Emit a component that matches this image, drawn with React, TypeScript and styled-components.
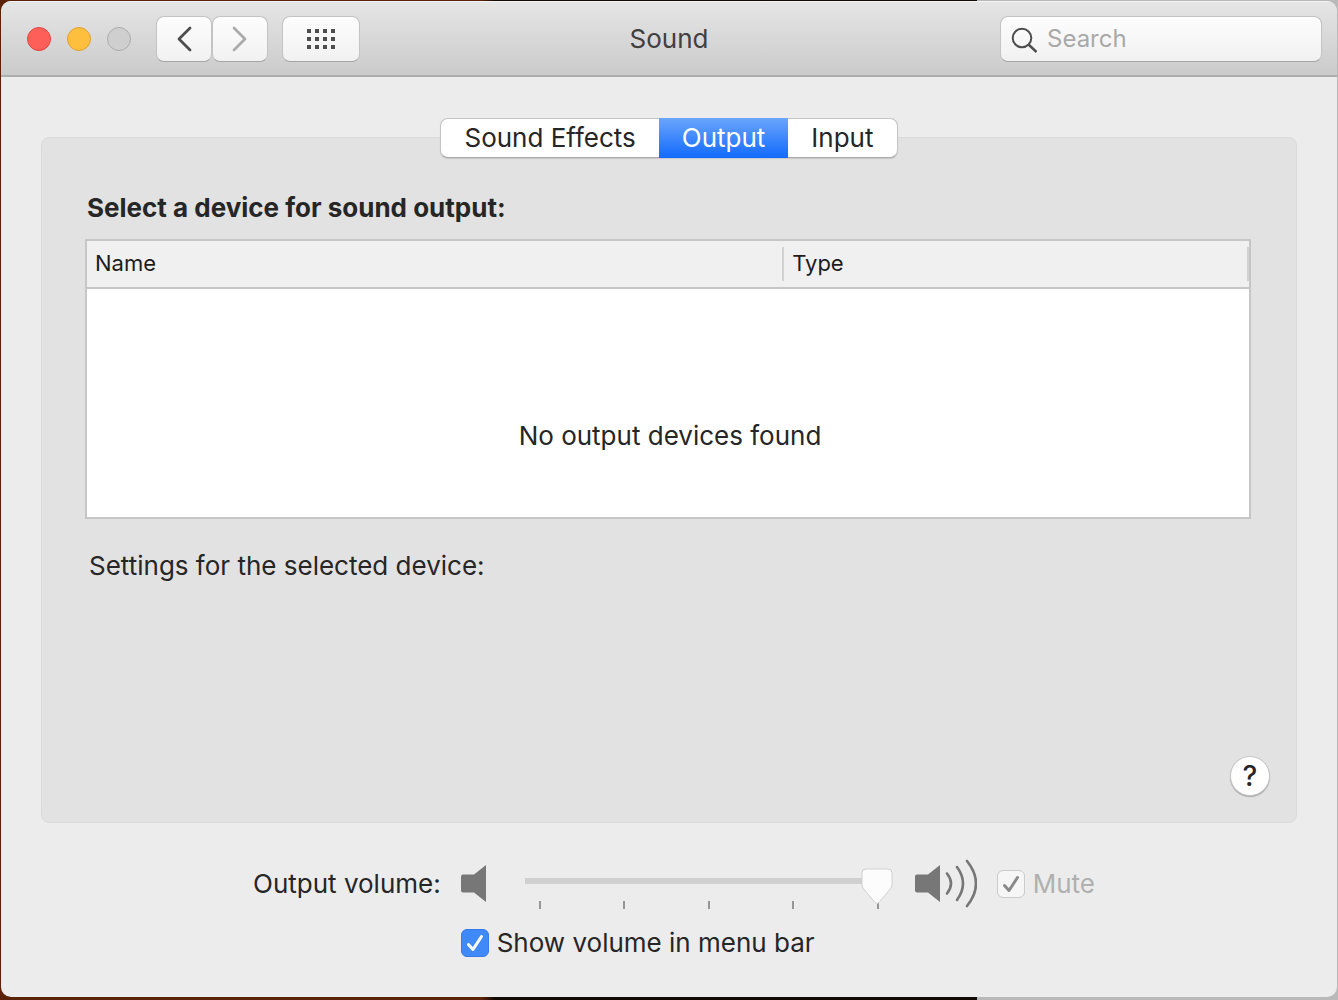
import React, { useState } from 'react';
import styled, { createGlobalStyle, css } from 'styled-components';

const GlobalStyle = createGlobalStyle`
  * { box-sizing: border-box; }
  body {
    margin: 0;
    font-family: Inter, "Liberation Sans", sans-serif;
    font-size: 26px;
    line-height: 32px;
    color: #262626;
  }
  button, input { font: inherit; color: inherit; }
`;

const Desktop = styled.div`
  display: flex;
  min-height: 100vh;
  padding: 1px 1px 3px;
  background: linear-gradient(to right, #5a2209 36%, #120a05 37% 73%, #b9b9b9 73%);
`;

const Window = styled.div`
  flex: 1;
  display: flex;
  flex-direction: column;
  border-radius: 10px;
  overflow: hidden;
  background: #ececec;
`;

const Toolbar = styled.header`
  display: grid;
  grid-template-columns: 1fr auto 1fr;
  align-items: center;
  height: 76px;
  padding: 0 15px;
  border-top: 1px solid #f4f4f4;
  border-bottom: 2px solid #adadad;
  background: linear-gradient(#e5e5e5, #cbcbcb);
`;

const ToolbarGroup = styled.div`
  display: flex;
  align-items: center;
`;

const Lights = styled.div`
  display: flex;
  gap: 16px;
  margin: 0 25px 0 11px;
`;

const Light = styled.button<{ $fill: string; $edge: string }>`
  width: 24px;
  height: 24px;
  padding: 0;
  border: 1px solid ${(p) => p.$edge};
  border-radius: 50%;
  background: ${(p) => p.$fill};
`;

const raised = css`
  border: 1px solid #c3c3c3;
  border-bottom-color: #a5a5a5;
  border-radius: 8px;
  background: linear-gradient(#fdfdfd, #f1f1f1);
`;

const ToolButton = styled.button<{ $wide?: boolean }>`
  ${raised}
  display: flex;
  align-items: center;
  justify-content: center;
  width: ${(p) => (p.$wide ? 78 : 56)}px;
  height: 46px;
  margin-left: ${(p) => (p.$wide ? 14 : 0)}px;
  padding: 0;
  color: ${(p) => (p.disabled ? '#ababab' : '#4d4d4d')};
`;

const Title = styled.h1`
  margin: 0;
  font-size: 26px;
  font-weight: 400;
  color: #404040;
`;

const SearchBox = styled.label`
  ${raised}
  display: flex;
  align-items: center;
  gap: 8px;
  justify-self: end;
  width: 322px;
  height: 46px;
  padding: 0 10px;
`;

const SearchInput = styled.input`
  flex: 1;
  min-width: 0;
  padding: 0;
  border: 0;
  outline: 0;
  background: none;
  font-size: 24px;
  &::placeholder { color: #a9a9a9; opacity: 1; }
`;

const Content = styled.main`
  flex: 1;
  display: flex;
  flex-direction: column;
  padding: 41px 40px 38px;
`;

const Tabs = styled.div`
  position: relative;
  display: flex;
  align-self: center;
  height: 40px;
  border: 1px solid #c4c4c4;
  border-bottom-color: #a9a9a9;
  border-radius: 8px;
  background: #fff;
  box-shadow: 0 1px 1px rgba(0, 0, 0, 0.12);
`;

const Tab = styled.button<{ $active: boolean }>`
  margin: -1px 0;
  padding: 0 23px;
  border: 0;
  background: ${(p) => (p.$active ? 'linear-gradient(#6aa5fb, #136afd)' : 'none')};
  color: ${(p) => (p.$active ? '#fff' : '#262626')};
`;

const Panel = styled.section`
  flex: 1;
  display: flex;
  flex-direction: column;
  margin-top: -21px;
  padding: 54px 26px 26px 43px;
  border: 1px solid #dadada;
  border-radius: 8px;
  background: #e2e2e2;
`;

const Heading = styled.h2`
  margin: 0 2px 15px;
  font-size: 26px;
  font-weight: 700;
`;

const DeviceFrame = styled.div`
  margin-right: 19px;
  border: 2px solid #c6c6c6;
  background: #fff;
`;

const DeviceTable = styled.table`
  width: 100%;
  border-collapse: separate;
  border-spacing: 0;
`;

const ColumnHead = styled.th<{ $width: string }>`
  width: ${(p) => p.$width};
  height: 48px;
  padding: 0;
  border-bottom: 2px solid #c6c6c6;
  background: #f0f0f0;
  font-size: 22px;
  font-weight: 400;
  text-align: left;
`;

const ColumnLabel = styled.div`
  height: 34px;
  padding: 0 8px;
  border-right: 2px solid #d2d2d2;
  color: #1c1c1c;
`;

const EmptyCell = styled.td`
  height: 228px;
  padding: 66px 0 0 4px;
  text-align: center;
`;

const SettingsNote = styled.p`
  margin: 31px 4px;
`;

const HelpButton = styled.button`
  align-self: flex-end;
  width: 40px;
  height: 40px;
  margin-top: auto;
  padding: 0;
  border: 1px solid #c6c6c6;
  border-radius: 50%;
  background: #fff;
  box-shadow: 0 1px 1px rgba(0, 0, 0, 0.25);
  font-size: 28px;
  font-weight: 500;
`;

const Controls = styled.div`
  display: grid;
  grid-template-columns: auto auto;
  justify-content: center;
  align-items: center;
  column-gap: 20px;
  row-gap: 18px;
  margin-top: 36px;
  padding-left: 10px;
`;

const ControlRow = styled.div`
  grid-column: 2;
  display: flex;
  align-items: center;
`;

const SliderBox = styled.div`
  width: 368px;
  height: 50px;
  margin: 0 22px 0 38px;
  padding-top: 10px;
`;

const Ticks = styled.div`
  display: flex;
  justify-content: space-between;
  height: 8px;
  margin-top: -4px;
  padding: 0 14px;
`;

const Tick = styled.span`
  width: 2px;
  background: #969696;
`;

const thumb = encodeURIComponent(
  '<svg xmlns="http://www.w3.org/2000/svg" width="32" height="38" viewBox="0 0 32 38"><path d="M5 1H27Q31 1 31 5V17Q31 19 29.500 20.700L18 34.500Q16 36.500 14 34.500L2.500 20.700Q1 19 1 17V5Q1 1 5 1Z" fill="#fcfcfc" stroke="#d0d0d0"/></svg>',
);

const Slider = styled.input`
  position: relative;
  display: block;
  width: 100%;
  height: 36px;
  margin: 0;
  appearance: none;
  background: linear-gradient(#d0d0d0, #d0d0d0) 0 9px / 352px 6px no-repeat;
  border-radius: 3px;
  &::-webkit-slider-thumb {
    appearance: none;
    width: 32px;
    height: 38px;
    background: url("data:image/svg+xml,${thumb}") no-repeat;
  }
`;

const CheckLabel = styled.label<{ $dim?: boolean }>`
  display: flex;
  align-items: center;
  gap: 8px;
  margin-left: ${(p) => (p.$dim ? 20 : 0)}px;
  color: ${(p) => (p.$dim ? '#b0b0b0' : '#262626')};
`;

const CheckBox = styled.span`
  display: grid;
  width: 28px;
  height: 28px;
  > * { grid-area: 1 / 1; }
  > svg { pointer-events: none; z-index: 1; }
`;

const CheckInput = styled.input`
  appearance: none;
  width: 28px;
  height: 28px;
  margin: 0;
  border: 1px solid #3579ea;
  border-radius: 6px;
  background: #3f89f9;
  &:not(:checked) + svg { visibility: hidden; }
  &:not(:checked) { background: #fff; border-color: #c4c4c4; }
  &:disabled { background: #f6f6f6; border-color: #cbcbcb; }
`;

function Check({ color }: { color: string }) {
  return (
    <svg width="28" height="28" viewBox="0 0 28 28" fill="none" stroke={color} strokeWidth="3" strokeLinecap="round" strokeLinejoin="round">
      <path d="M7.500 15.500L12 20.500L20.500 7.500" />
    </svg>
  );
}

function Speaker({ loud }: { loud?: boolean }) {
  return (
    <svg width={loud ? 62 : 26} height="50" viewBox={loud ? '0 0 62 50' : '0 0 26 50'} fill="none" stroke="#777" strokeWidth="2.600" strokeLinecap="round">
      <path d="M2 15.500H13L25 6V43L13 33.500H2Q0 33.500 0 31.500V17.500Q0 15.500 2 15.500Z" fill="#777" stroke="none" />
      {loud && <path d="M32 14.500Q40 24.500 32 34.500M42 8Q54 24.500 42 41M52 2Q70 24.500 52 47" />}
    </svg>
  );
}

function Chevron({ right }: { right?: boolean }) {
  return (
    <svg width="28" height="28" viewBox="0 0 28 28" fill="none" stroke="currentColor" strokeWidth="2.800" strokeLinecap="round" strokeLinejoin="round">
      <path d={right ? 'M8 3L19 14L8 25' : 'M20 3L9 14L20 25'} />
    </svg>
  );
}

const tabNames = ['Sound Effects', 'Output', 'Input'];

export default function App() {
  const [tab, setTab] = useState('Output');
  return (
    <>
      <GlobalStyle />
      <Desktop>
        <Window>
          <Toolbar>
            <ToolbarGroup>
              <Lights>
                <Light aria-label="Close" $fill="#fe6059" $edge="#e2463f" />
                <Light aria-label="Minimize" $fill="#febe3e" $edge="#e0a033" />
                <Light aria-label="Zoom" $fill="#cfcfcf" $edge="#acacac" disabled />
              </Lights>
              <ToolButton aria-label="Back"><Chevron /></ToolButton>
              <ToolButton aria-label="Forward" disabled><Chevron right /></ToolButton>
              <ToolButton aria-label="Show all" $wide>
                <svg width="28" height="20" viewBox="0 0 28 20" fill="#4d4d4d">
                  {[0, 8, 16].map((y) => [0, 8, 16, 24].map((x) => <rect key={`${x}-${y}`} x={x} y={y} width="4" height="4" />))}
                </svg>
              </ToolButton>
            </ToolbarGroup>
            <Title>Sound</Title>
            <SearchBox>
              <svg width="28" height="28" viewBox="0 0 28 28" fill="none" stroke="#4d4d4d" strokeWidth="2">
                <circle cx="11" cy="13" r="9.300" />
                <path d="M17.500 19.500L25.500 27" strokeWidth="2.400" />
              </svg>
              <SearchInput type="text" placeholder="Search" aria-label="Search" />
            </SearchBox>
          </Toolbar>
          <Content>
            <Tabs role="tablist">
              {tabNames.map((name) => (
                <Tab key={name} role="tab" aria-selected={tab === name} $active={tab === name} onClick={() => setTab(name)}>
                  {name}
                </Tab>
              ))}
            </Tabs>
            <Panel>
              <Heading>Select a device for sound output:</Heading>
              <DeviceFrame>
                <DeviceTable>
                  <thead>
                    <tr>
                      <ColumnHead scope="col" $width="60%"><ColumnLabel>Name</ColumnLabel></ColumnHead>
                      <ColumnHead scope="col" $width="40%"><ColumnLabel>Type</ColumnLabel></ColumnHead>
                    </tr>
                  </thead>
                  <tbody>
                    <tr><EmptyCell colSpan={2}>No output devices found</EmptyCell></tr>
                  </tbody>
                </DeviceTable>
              </DeviceFrame>
              <SettingsNote>Settings for the selected device:</SettingsNote>
              <HelpButton aria-label="Help">?</HelpButton>
            </Panel>
            <Controls>
              <label htmlFor="volume">Output volume:</label>
              <ControlRow>
                <Speaker />
                <SliderBox>
                  <Slider id="volume" type="range" min="0" max="4" step="1" defaultValue="4" />
                  <Ticks>{[0, 1, 2, 3, 4].map((n) => <Tick key={n} />)}</Ticks>
                </SliderBox>
                <Speaker loud />
                <CheckLabel $dim>
                  <CheckBox><CheckInput type="checkbox" defaultChecked disabled /><Check color="#8a8a8a" /></CheckBox>
                  Mute
                </CheckLabel>
              </ControlRow>
              <ControlRow>
                <CheckLabel>
                  <CheckBox><CheckInput type="checkbox" defaultChecked /><Check color="#fff" /></CheckBox>
                  Show volume in menu bar
                </CheckLabel>
              </ControlRow>
            </Controls>
          </Content>
        </Window>
      </Desktop>
    </>
  );
}
